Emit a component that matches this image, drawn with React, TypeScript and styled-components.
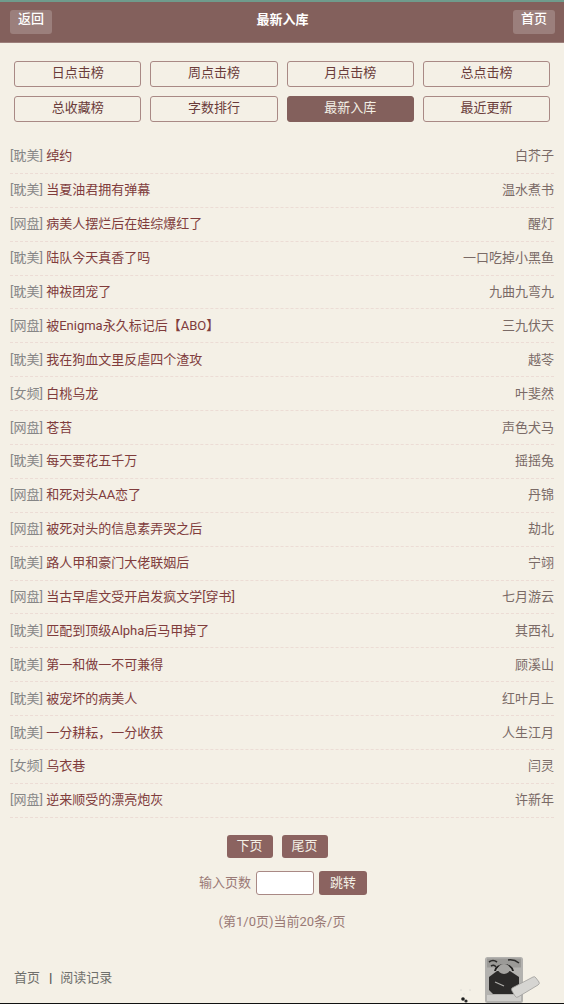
import React from 'react';
import styled, { createGlobalStyle } from 'styled-components';

const RANKS = [
    { label: '日点击榜' },
    { label: '周点击榜' },
    { label: '月点击榜' },
    { label: '总点击榜' },
    { label: '总收藏榜' },
    { label: '字数排行' },
    { label: '最新入库', active: true },
    { label: '最近更新' },
];

const BOOKS = [
    ['耽美', '绰约', '白芥子'],
    ['耽美', '当夏油君拥有弹幕', '温水煮书'],
    ['网盘', '病美人摆烂后在娃综爆红了', '醒灯'],
    ['耽美', '陆队今天真香了吗', '一口吃掉小黑鱼'],
    ['耽美', '神祓团宠了', '九曲九弯九'],
    ['网盘', '被Enigma永久标记后【ABO】', '三九伏天'],
    ['耽美', '我在狗血文里反虐四个渣攻', '越苓'],
    ['女频', '白桃乌龙', '叶斐然'],
    ['网盘', '苍苔', '声色犬马'],
    ['耽美', '每天要花五千万', '摇摇兔'],
    ['网盘', '和死对头AA恋了', '丹锦'],
    ['网盘', '被死对头的信息素弄哭之后', '劫北'],
    ['耽美', '路人甲和豪门大佬联姻后', '宁翊'],
    ['网盘', '当古早虐文受开启发疯文学[穿书]', '七月游云'],
    ['耽美', '匹配到顶级Alpha后马甲掉了', '其西礼'],
    ['耽美', '第一和做一不可兼得', '顾溪山'],
    ['耽美', '被宠坏的病美人', '红叶月上'],
    ['耽美', '一分耕耘，一分收获', '人生江月'],
    ['女频', '乌衣巷', '闫灵'],
    ['网盘', '逆来顺受的漂亮炮灰', '许新年'],
];

const App: React.FC = () => {
    return (
        <Page>
            <GlobalStyle />
            <Header>
                <HeaderButton>返回</HeaderButton>
                <HeaderTitle>最新入库</HeaderTitle>
                <HeaderButton>首页</HeaderButton>
            </Header>
            <RankGrid>
                {RANKS.map((rank) => (
                    <RankButton key={rank.label} $active={rank.active}>
                        {rank.label}
                    </RankButton>
                ))}
            </RankGrid>
            <BookList>
                {BOOKS.map(([tag, title, author]) => (
                    <BookRow key={title}>
                        <span>
                            <BookTag>[{tag}]</BookTag> <BookTitle>{title}</BookTitle>
                        </span>
                        <BookAuthor>{author}</BookAuthor>
                    </BookRow>
                ))}
            </BookList>
            <PagerRow>
                <PagerButton>下页</PagerButton>
                <PagerButton>尾页</PagerButton>
            </PagerRow>
            <JumpRow>
                <span>输入页数</span>
                <PageInput />
                <JumpButton>跳转</JumpButton>
            </JumpRow>
            <PageInfo>(第1/0页)当前20条/页</PageInfo>
            <Footer>
                <FooterLinks>
                    <span>首页</span>
                    <FooterBar>|</FooterBar>
                    <span>阅读记录</span>
                </FooterLinks>
                <Mascot viewBox="0 0 84 46" aria-hidden="true">
                    <circle cx="3" cy="42" r="1.8" fill="#1e1e1e" />
                    <circle cx="6" cy="44" r="1.6" fill="#2a2a2a" />
                    <circle cx="1" cy="33" r="0.5" fill="#bbb" />
                    <circle cx="10" cy="33" r="0.5" fill="#bbb" />
                    <circle cx="4" cy="37" r="0.5" fill="#ccc" />
                    <rect x="25" y="0" width="38" height="46" rx="2.5" fill="#b3b2af" />
                    <rect x="27" y="1.5" width="34" height="9" fill="#9b9a97" />
                    <path d="M29 5 q4 -3 8 0 M48 3 q6 -1 11 3 M31 9 q3 -2 5 1" stroke="#2b2a29" strokeWidth="1.6" fill="none" />
                    <path d="M35 14 C36 6 52 6 53 14" stroke="#1f1e1d" strokeWidth="2" fill="none" />
                    <path d="M29 20 L37 14 L50 14 L59 20 L59 33 L54 37 L33 37 L29 33 Z" fill="#2b2a29" />
                    <ellipse cx="44" cy="12" rx="6" ry="5" fill="#a5a4a1" />
                    <path d="M35 25 l9 4" stroke="#b0afac" strokeWidth="1.2" />
                    <rect x="27" y="38" width="34" height="6" fill="#cfcecb" />
                    <path d="M52 31 L73 20 Q75 19 76 21 L79 25 Q80 27 78 28 L58 40 Q56 41 55 39 L52 34 Q51 32 52 31 Z" fill="#d6d5d2" stroke="#9e9d9a" strokeWidth="0.8" />
                </Mascot>
                <BottomEdge />
            </Footer>
        </Page>
    );
};

const GlobalStyle = createGlobalStyle`
    html, body {
        margin: 0;
        padding: 0;
        background: #f4f0e6;
    }
    * {
        box-sizing: border-box;
    }
`;

const Page = styled.div`
    width: 564px;
    height: 1004px;
    overflow: hidden;
    background: #f4f0e6;
    font-family: 'Roboto', 'Noto Sans CJK SC', sans-serif;
    font-size: 13px;
    line-height: 18px;
    display: flex;
    flex-direction: column;
`;

const Header = styled.div`
    height: 43px;
    flex: none;
    display: flex;
    align-items: center;
    justify-content: space-between;
    padding: 0 9px 1px 10px;
    background: #83605c;
    border-top: 2px solid #6f9b8c;
    border-bottom: 1px solid #9c7f7b;
`;

const HeaderButton = styled.div`
    width: 42px;
    height: 24px;
    display: flex;
    align-items: center;
    justify-content: center;
    padding-bottom: 5px;
    border-radius: 3px;
    background: #9b7f7c;
    color: #fff;
    font-size: 13px;
    font-weight: 500;
`;

const HeaderTitle = styled.div`
    color: #fff;
    font-size: 13px;
    font-weight: 700;
    margin-top: -4px;
`;

const RankGrid = styled.div`
    display: grid;
    grid-template-columns: repeat(4, 127.3px);
    column-gap: 9px;
    row-gap: 9px;
    margin: 18px 0 0 14px;
`;

const RankButton = styled.div<{ $active?: boolean }>`
    height: 26px;
    display: flex;
    align-items: center;
    justify-content: center;
    padding-bottom: 3px;
    border-radius: 3px;
    border: 1px solid ${(p) => (p.$active ? '#83605c' : '#a98985')};
    background: ${(p) => (p.$active ? '#83605c' : 'transparent')};
    color: ${(p) => (p.$active ? '#f4f0e6' : '#6a3c3a')};
    font-size: 13px;
`;

const BookList = styled.div`
    margin: 18px 10px 0;
`;

const BookRow = styled.div`
    height: 33.9px;
    display: flex;
    align-items: center;
    justify-content: space-between;
    border-bottom: 1px dashed #ecdcd5;
    white-space: nowrap;
`;

const BookTag = styled.span`
    color: #868686;
`;

const BookTitle = styled.span`
    color: #803c3c;
`;

const BookAuthor = styled.span`
    color: #7a6a66;
`;

const PagerRow = styled.div`
    display: flex;
    justify-content: center;
    gap: 9px;
    margin: 17px 10px 0 0;
`;

const PagerButton = styled.div`
    width: 46px;
    height: 23px;
    display: flex;
    align-items: center;
    justify-content: center;
    padding-bottom: 1px;
    border-radius: 3px;
    background: #8b6360;
    color: #f4f0e6;
    font-size: 13px;
`;

const JumpRow = styled.div`
    display: flex;
    justify-content: center;
    align-items: center;
    margin: 13px 0 0 2px;
    color: #9a7a76;
    font-size: 13px;
`;

const PageInput = styled.input`
    width: 58px;
    height: 24px;
    margin: 0 5px;
    padding: 0;
    border: 1px solid #a98985;
    border-radius: 3px;
    background: #fff;
`;

const JumpButton = styled(PagerButton)`
    width: 48px;
    height: 24px;
    padding-bottom: 0;
`;

const PageInfo = styled.div`
    margin-top: 18px;
    text-align: center;
    color: #9a7a76;
    font-size: 13px;
`;

const Footer = styled.div`
    flex: 1;
    display: flex;
    align-items: flex-start;
    padding: 38px 0 0 14px;
    position: relative;
`;

const FooterLinks = styled.div`
    display: flex;
    gap: 8px;
    color: #6f6f6b;
    font-size: 13px;
`;

const FooterBar = styled.span`
    font-weight: 900;
    color: #555;
    margin-left: 1px;
`;

const Mascot = styled.svg`
    position: absolute;
    left: 460px;
    bottom: 1px;
    width: 84px;
    height: 46px;
`;

const BottomEdge = styled.div`
    position: absolute;
    left: 0;
    right: 0;
    bottom: 0;
    height: 1px;
    background: #111;
`;

export default App;
